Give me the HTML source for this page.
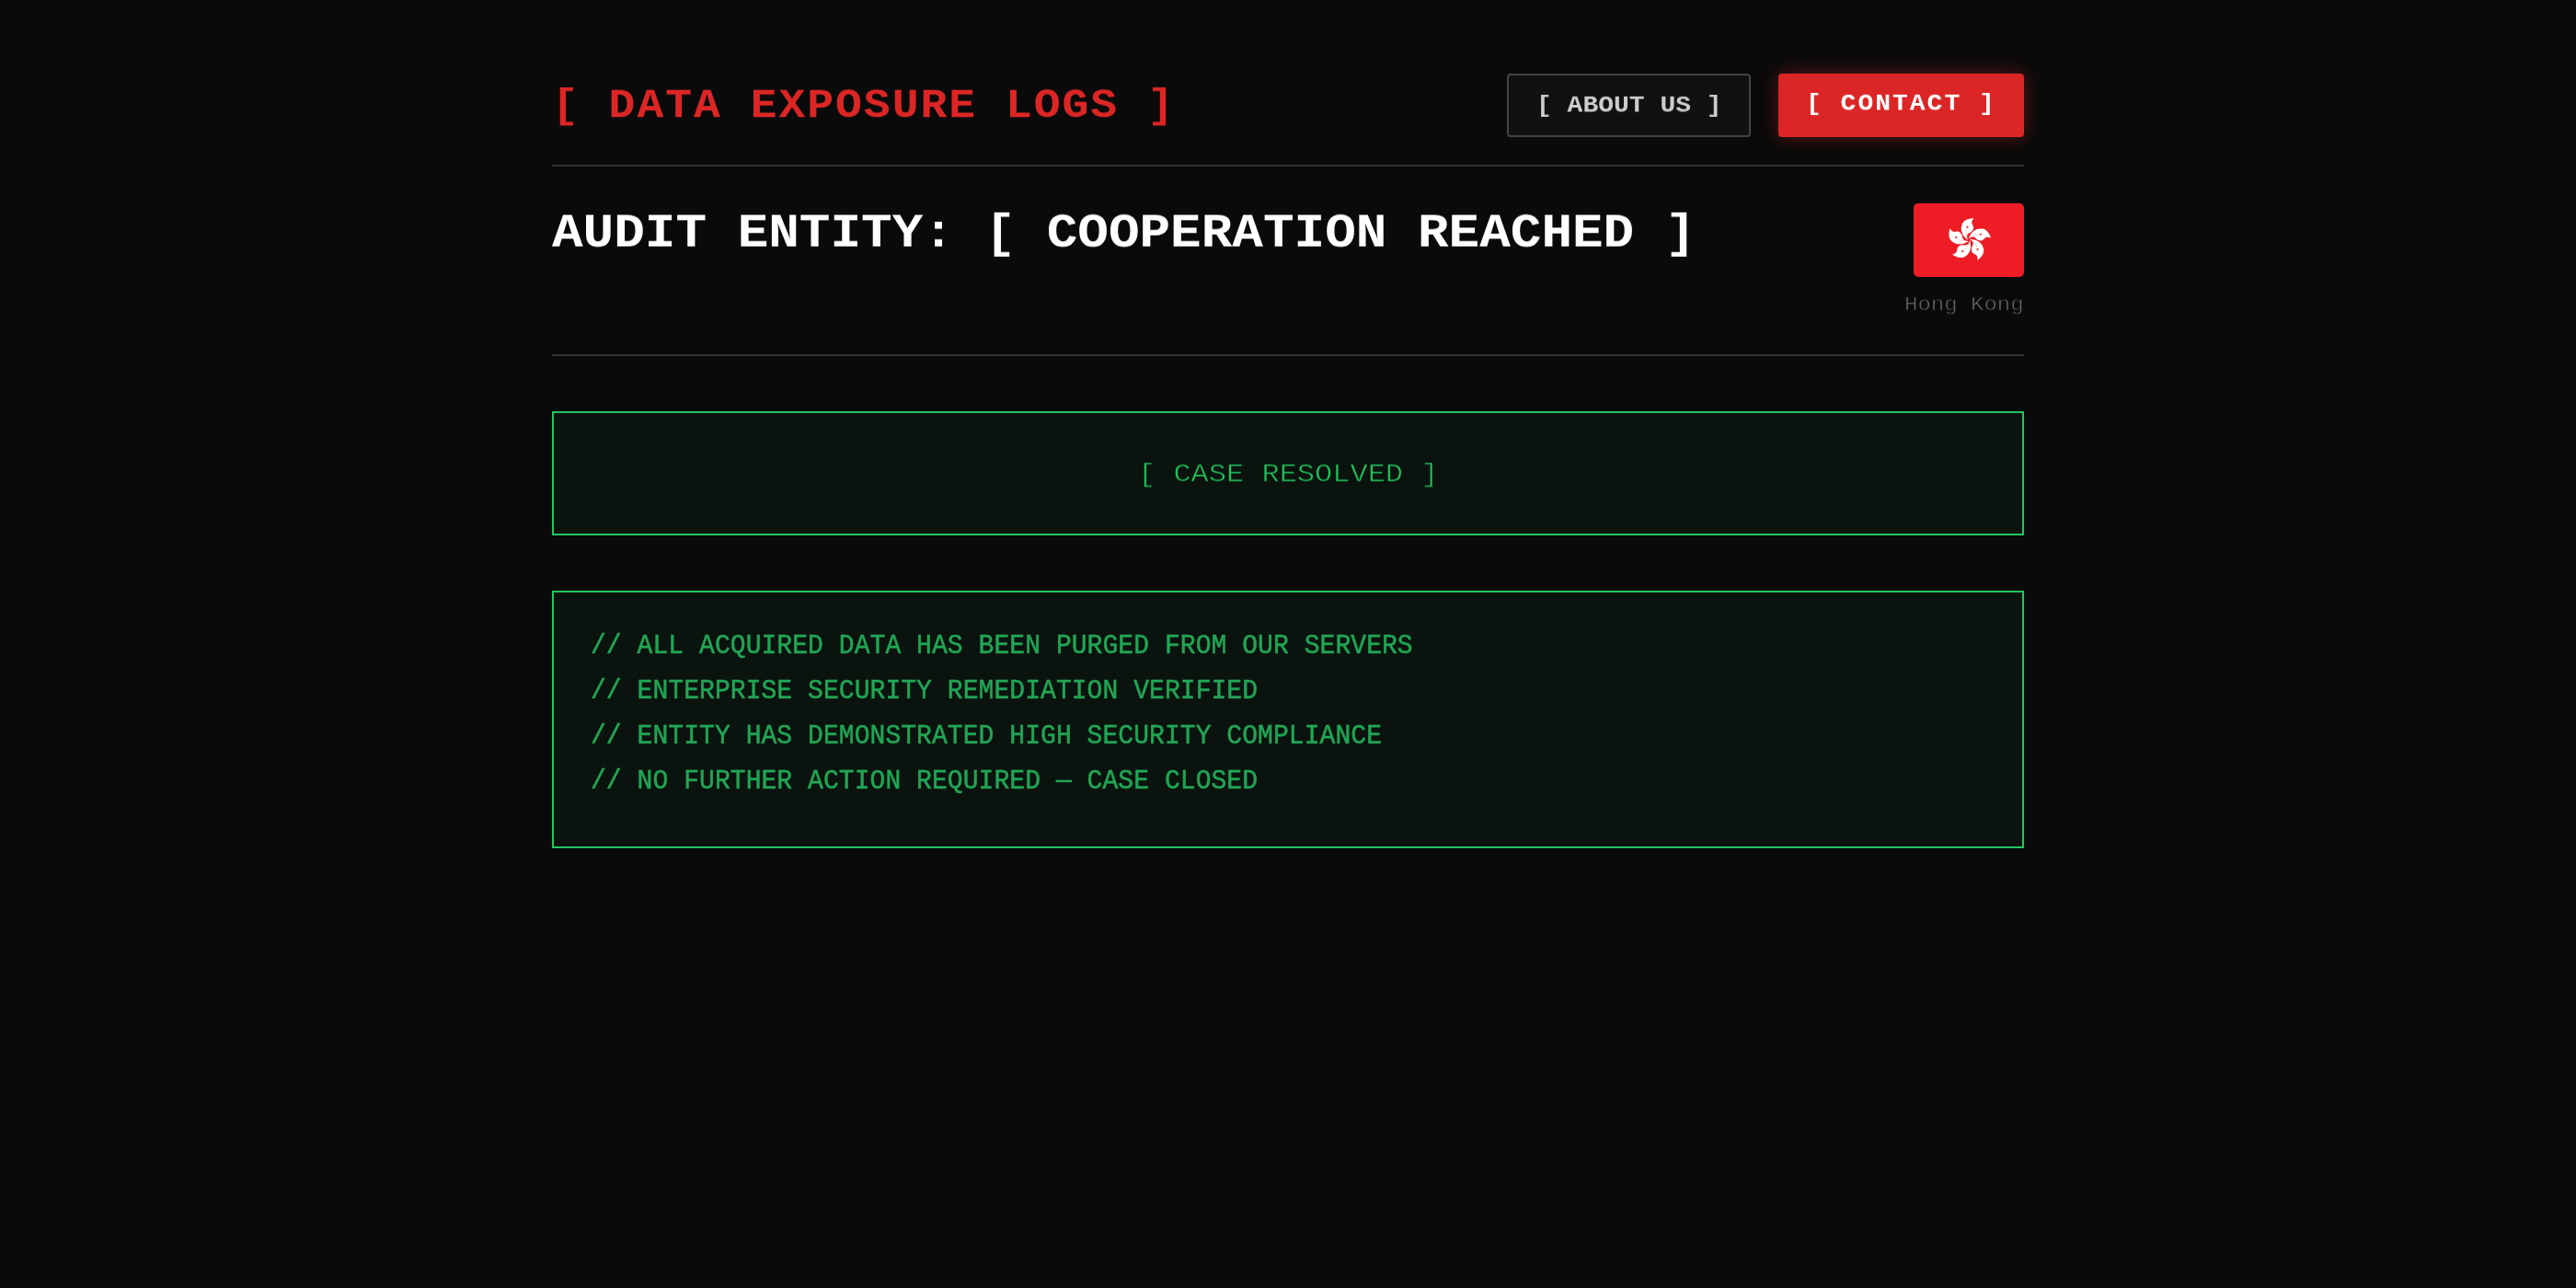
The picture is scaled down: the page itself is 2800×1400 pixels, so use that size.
<!DOCTYPE html>
<html lang="en">
<head>
<meta charset="utf-8">
<title>Data Exposure Logs</title>
<style>
*{box-sizing:border-box;margin:0;padding:0}
html,body{width:2800px;height:1400px;background:#0a0a0a;overflow:hidden}
@media (max-width:2000px){html{zoom:.5}}
body{font-family:"Liberation Mono",monospace;color:#fff;position:relative}
.wrap{position:absolute;left:600px;top:0;width:1600px;height:1400px}
.t{position:absolute;display:block;white-space:pre;transform-origin:0 0;transform:scaleY(0.925);will-change:transform}
.logo{position:absolute;left:0;top:93.09px;font-size:48px;line-height:48px;letter-spacing:2px;font-weight:bold;color:#dc2626}
.btn{position:absolute;top:80px;height:69px;border-radius:4px;font-weight:bold;font-size:28px;line-height:28px}
.about{left:1038px;width:265px;background:#111;border:2px solid #444;color:#ccc}
.about .t{left:29.7px;top:20.46px}
.contact{left:1333px;width:267px;background:#dc2626;color:#fff;letter-spacing:2px;box-shadow:0 0 20px rgba(220,38,38,.42)}
.contact .t{left:30px;top:19.66px}
.hr{position:absolute;left:0;width:1600px;height:2px;background:#333}
.hr1{top:179px}
.hr2{top:385px}
h1{position:absolute;left:0;top:228.42px;font-size:56px;line-height:56px;font-weight:bold;color:#fff}
.flag{position:absolute;left:1480px;top:221px;width:120px;height:80px;border-radius:5px;background:#ee1c25;overflow:hidden}
.flag svg{display:block}
.country{position:absolute;left:1470.4px;top:320.94px;font-size:24px;line-height:24px;color:#666;-webkit-text-stroke:0.6px #0a0a0a}
.country .t{transform:scaleY(0.89)}
.box{position:absolute;left:0;width:1600px;border:2px solid #22c55e;background:#0b130e}
.b1{top:447px;height:135px;font-size:32px;line-height:32px;color:#22c55e;-webkit-text-stroke:0.7px #0b130e}
.b1 .t{left:634.8px;top:52.80px;transform:scaleY(0.885)}
.b2{top:642px;height:280px;font-size:28px;line-height:46.053px;letter-spacing:0.06px;color:#21a555;-webkit-text-stroke:0.5px #21a555}
.b2 .t{left:40px;top:33.57px;transform:scaleY(1.064)}
</style>
</head>
<body>
<div class="wrap">
  <div class="logo"><span class="t">[ DATA EXPOSURE LOGS ]</span></div>
  <div class="btn about"><span class="t">[ ABOUT US ]</span></div>
  <div class="btn contact"><span class="t">[ CONTACT ]</span></div>
  <div class="hr hr1"></div>
  <h1><span class="t">AUDIT ENTITY: [ COOPERATION REACHED ]</span></h1>
  <div class="flag"><svg viewBox="0 0 120 80" width="120" height="80"><defs><g id="p"><path d="M22.0 -98.0C19.0 -91.7 13.2 -86.0 13.0 -79.0C12.8 -72.0 21.0 -62.8 21.0 -56.0C21.0 -49.2 16.7 -42.5 13.0 -38.0C9.3 -33.5 2.5 -32.0 -1.0 -29.0C-4.5 -26.0 -7.0 -23.7 -8.0 -20.0C-9.0 -16.3 -7.5 -10.7 -7.0 -7.0C-6.5 -3.3 -5.7 -1.0 -5.0 2.0C-7.7 -1.0 -9.7 -3.3 -13.0 -7.0C-16.3 -10.7 -21.8 -15.2 -25.0 -20.0C-28.2 -24.8 -30.4 -30.7 -32.0 -36.0C-33.6 -41.3 -35.0 -45.7 -34.5 -52.0C-34.0 -58.3 -32.2 -67.9 -29.0 -74.0C-25.8 -80.1 -19.7 -85.2 -15.0 -88.5C-10.3 -91.8 -5.5 -92.7 -1.0 -94.0C3.5 -95.3 8.2 -95.8 12.0 -96.5C15.8 -97.2 18.7 -97.5 22.0 -98.0Z" fill="#fff"/><path d="M-4.6 -64.6L-4.6 -59.6L-0.0 -57.8L-4.7 -56.2L-5.1 -51.3L-8.0 -55.2L-12.8 -54.1L-9.9 -58.1L-12.5 -62.3L-7.8 -60.8Z" fill="#ee1c25"/><path d="M-8.5 -50C-16 -36 -15 -20 -3 -6" fill="none" stroke="#ee1c25" stroke-width="1.2" stroke-opacity=".7"/></g></defs><g transform="translate(60.1 39.7) scale(0.241)"><use href="#p" transform="rotate(0)"/><use href="#p" transform="rotate(72)"/><use href="#p" transform="rotate(144)"/><use href="#p" transform="rotate(216)"/><use href="#p" transform="rotate(288)"/></g></svg></div>
  <div class="country"><span class="t">Hong Kong</span></div>
  <div class="hr hr2"></div>
  <div class="box b1"><span class="t">[ CASE RESOLVED ]</span></div>
  <div class="box b2"><span class="t">// ALL ACQUIRED DATA HAS BEEN PURGED FROM OUR SERVERS
// ENTERPRISE SECURITY REMEDIATION VERIFIED
// ENTITY HAS DEMONSTRATED HIGH SECURITY COMPLIANCE
// NO FURTHER ACTION REQUIRED — CASE CLOSED</span></div>
</div>
</body>
</html>
